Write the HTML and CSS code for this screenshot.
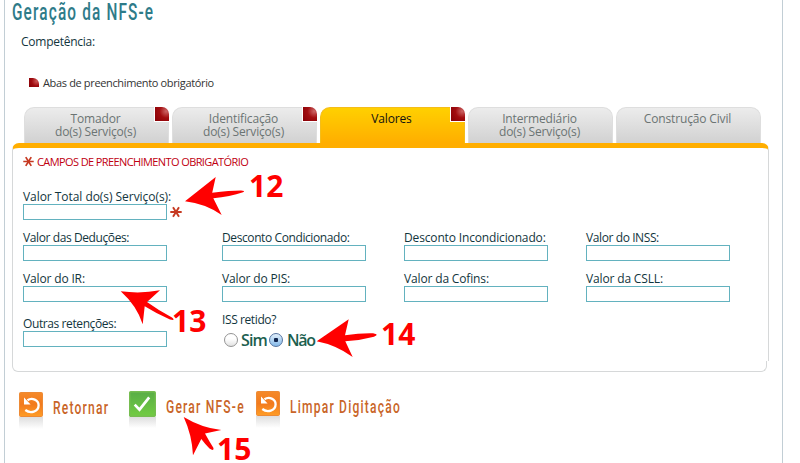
FILE: index.html
```html
<!DOCTYPE html>
<html lang="pt-BR">
<head>
<meta charset="utf-8">
<title>Geração da NFS-e</title>
<link rel="stylesheet" href="styles.css">
</head>
<body>
<svg class="defs" aria-hidden="true">
  <defs>
    <linearGradient id="orange" x1="0" y1="0" x2="0" y2="1"><stop offset="0" stop-color="#f58a2a"/><stop offset=".5" stop-color="#f27a1d"/><stop offset="1" stop-color="#ff9d26"/></linearGradient>
    <linearGradient id="green" x1="0" y1="0" x2="0" y2="1"><stop offset="0" stop-color="#59ad46"/><stop offset="1" stop-color="#72cc42"/></linearGradient>
    <linearGradient id="shade" x1="0" y1="0" x2="0" y2="1"><stop offset="0" stop-color="#dedede"/><stop offset="1" stop-color="#fff"/></linearGradient>
    <symbol id="star" viewBox="0 0 12 12"><path d="M.3 6h11.400M3 1.200l6 9.600M9 1.200L3 10.800" stroke="#c63a22" stroke-width="1.900" fill="none"/></symbol>
    <symbol id="undo" viewBox="0 0 24 37">
      <path fill="url(#shade)" d="M0 25h24v12H0z"/>
      <rect x=".5" y=".5" width="23" height="24" rx="1" fill="url(#orange)" stroke="#ed8a35"/>
      <path d="M8.500 8.300C13 5.200 19.600 8 19.600 13.200c0 6.600-8.300 8.800-13.300 4.800" fill="none" stroke="#fff" stroke-width="2.300"/>
      <path d="M5 5.500v7h6.600z" fill="#fff"/>
    </symbol>
    <symbol id="check" viewBox="0 0 27 37">
      <path fill="url(#shade)" d="M0 26h27v11H0z"/>
      <rect x=".7" y=".7" width="25.6" height="24.6" rx="1" fill="url(#green)" stroke="#76bd50" stroke-width="1.4"/>
      <path d="M5.7 13.6l4.8 5L20.2 6.3" fill="none" stroke="#fff" stroke-width="2.7"/>
    </symbol>
  </defs>
</svg>
<main class="page">
  <h1 class="title"><span>Geração da NFS-e</span></h1>
  <p class="period">Competência:</p>
  <p class="legend"><i class="mark"></i><span>Abas de preenchimento obrigatório</span></p>

  <nav class="tabs">
    <a class="tab"><span>Tomador<br>do(s) Serviço(s)</span><i class="corner"></i></a>
    <a class="tab"><span>Identificação<br>do(s) Serviço(s)</span><i class="corner"></i></a>
    <a class="tab active"><span>Valores</span><i class="corner"></i></a>
    <a class="tab"><span>Intermediário<br>do(s) Serviço(s)</span></a>
    <a class="tab"><span>Construção Civil</span></a>
  </nav>

  <section class="panel">
    <p class="required"><svg><use href="#star"/></svg><span>CAMPOS DE PREENCHIMENTO OBRIGATÓRIO</span></p>
    <div class="fields">
      <div class="field total"><label>Valor Total do(s) Serviço(s):</label><div class="line"><input type="text"><svg><use href="#star"/></svg></div></div>
      <div class="field"><label class="tight">Valor das Deduções:</label><input type="text"></div>
      <div class="field"><label class="tight">Desconto Condicionado:</label><input type="text"></div>
      <div class="field"><label>Desconto Incondicionado:</label><input type="text"></div>
      <div class="field"><label class="tight">Valor do INSS:</label><input type="text"></div>
      <div class="field"><label>Valor do IR:</label><input type="text"></div>
      <div class="field"><label>Valor do PIS:</label><input type="text"></div>
      <div class="field"><label>Valor da Cofins:</label><input type="text"></div>
      <div class="field"><label>Valor da CSLL:</label><input type="text"></div>
      <div class="field other"><label class="tight">Outras retenções:</label><input type="text"></div>
      <div class="field"><label class="tight">ISS retido?</label>
        <div class="radios"><i class="radio"></i><span class="sim">Sim</span><i class="radio on"></i><span class="nao">Não</span></div>
      </div>
    </div>
  </section>
  <div class="panel-foot"></div>

  <div class="actions">
    <a class="action back"><svg><use href="#undo"/></svg><span>Retornar</span></a>
    <a class="action create"><svg><use href="#check"/></svg><span>Gerar NFS-e</span></a>
    <a class="action clear"><svg><use href="#undo"/></svg><span>Limpar Digitação</span></a>
  </div>
</main>

<svg class="notes" viewBox="0 0 800 463">
  <path d="M185 201.300L215.700 177L212.200 192.700Q230 190.500 241 190.500Q246 190.500 243 192.200Q230 196.500 213.300 198.300L221.700 215Q205 203.500 185 201.300Z"/>
  <path d="M120.700 291.300Q141 294 160 290.300L147 302Q158 310 172 317.500Q176 321 170 319.500Q157 314 144.700 306.300L142.700 324.300Q137 306 120.700 291.300Z"/>
  <path d="M316.700 341.300L348.700 319.300L345 335.300Q360 333 373 333.300Q380 334.500 374 336.700Q360 340.500 345.300 341.200L352.700 357Q336 345 316.700 341.300Z"/>
  <path d="M183.700 417Q202 428 221.300 430L205 433.500Q209 441 213.500 448Q214 451.500 209.500 448.500Q205 444 201.300 439L193 455.300Q192 435 183.700 417Z"/>
  <text x="249" y="197">12</text>
  <text x="172" y="332">13</text>
  <text x="381" y="345">14</text>
  <text x="217" y="460">15</text>
</svg>
</body>
</html>
```
FILE: styles.css
```css
* { box-sizing: border-box; }
body {
  margin: 0;
  width: 800px;
  height: 463px;
  overflow: hidden;
  position: relative;
  background: #fff;
  color: #12353d;
  font: 500 12px/15px "Open Sans", sans-serif;
}
p, h1 { margin: 0; }
span, label { white-space: nowrap; }
.defs { position: absolute; width: 0; height: 0; }
.page {
  margin-left: 4px;
  width: 779px;
  height: 463px;
  border: solid #c2ced5;
  border-width: 0 1px;
}
.title {
  height: 34px;
  padding-left: 7px;
  font: 500 24px/25px Roboto, sans-serif;
  color: #2e7b89;
}
.title span {
  display: inline-block;
  letter-spacing: 1.8px;
  transform: scaleX(.64);
  transform-origin: 0 0;
}
.period { padding-left: 16px; height: 41px; letter-spacing: -.25px; }
.legend {
  display: flex;
  align-items: center;
  gap: 4px;
  height: 15px;
  padding-left: 24px;
  font-size: 11px;
  color: #333;
  letter-spacing: -.35px;
}
.mark {
  width: 10px;
  height: 9px;
  border-radius: 0 6px 0 0;
  background: radial-gradient(circle at 75% 35%, #c55 0, #a00c10 50%, #850006 100%);
}
.tabs { display: flex; gap: 3px; height: 36px; margin: 17px 0 0 19px; }
.tab {
  position: relative;
  width: 145px;
  padding: 4px 2px 0 0;
  border: solid #dedede;
  border-width: 1px 1px 0;
  border-radius: 10px 10px 0 0;
  background: linear-gradient(#ececec, #d1d1d1);
  color: #6b7473;
  line-height: 13px;
  text-align: center;
  letter-spacing: -.15px;
}
.tab.active { background: linear-gradient(#ffd000, #ffae00); border-color: #f4bd1a; color: #111; }
.corner {
  position: absolute;
  top: -1px;
  right: -1px;
  width: 15px;
  height: 15px;
  border: solid #fff;
  border-width: 0 0 1px 1px;
  border-radius: 0 7px 0 0;
  background: radial-gradient(circle at 80% 30%, #c66 0, #a20d10 45%, #860006 100%);
}
.panel {
  width: 757px;
  height: 218px;
  margin-left: 7px;
  padding: 6px 0 0 10px;
  border: 1px solid #d6d8d9;
  border-top: 5px solid #ffae00;
  border-bottom: 0;
  border-radius: 7px 7px 0 0;
}
.required { display: flex; align-items: center; gap: 3px; height: 15px; color: #c00010; font-size: 11px; letter-spacing: -.6px; }
.required svg { width: 11px; height: 11px; }
.fields { display: grid; grid-template-columns: 199px 182px 182px 182px; grid-auto-rows: 41px; margin-top: 20px; }
.field label { display: block; height: 15px; letter-spacing: -.15px; }
.field label.tight { letter-spacing: -.4px; }
.field input { display: block; width: 144px; height: 16px; padding: 0; border: 1px solid #63b2bf; background: #fff; }
.total { grid-column: 1 / -1; }
.field.total label { letter-spacing: -.05px; }
.line { display: flex; align-items: center; gap: 3px; }
.line svg { width: 12px; height: 12px; }
.field.other { padding-top: 4px; }
.radios { display: flex; align-items: center; height: 26px; padding-left: 2px; color: #1c604f; font: 600 16px/20px "Open Sans", sans-serif; }
.radio { width: 14px; height: 14px; flex: none; border: 1px solid #949494; border-radius: 50%; background: linear-gradient(#fff 40%, #e2e2e2); }
.radio.on { border-color: #5674a0; background: radial-gradient(circle, #10254e 0 2px, transparent 2.5px), linear-gradient(#e2f0fc, #85bae9); }
.sim { width: 31px; padding-left: 3px; letter-spacing: -.9px; }
.nao { padding-left: 4px; letter-spacing: -1.3px; }
.panel-foot { width: 755px; height: 11px; margin-left: 7px; border: 1px solid #d6d8d9; border-top: 0; border-radius: 0 0 6px 6px; }
.actions { display: flex; padding: 19px 0 0 14px; font: 500 18px/20px Roboto, sans-serif; color: #c96528; }
.action { display: flex; align-items: flex-start; }
.action svg { flex: none; width: 24px; height: 37px; }
.action span { display: inline-block; margin-top: 6px; margin-left: 10px; letter-spacing: 1.8px; transform: scaleX(.67); transform-origin: 0 0; }
.back { width: 110px; padding-top: 1px; }
.create { width: 127px; }
.action.create svg { width: 27px; }
.notes { position: absolute; inset: 0; width: 800px; height: 463px; fill: red; pointer-events: none; }
.notes text { font: 700 30px "Open Sans", sans-serif; }
```
